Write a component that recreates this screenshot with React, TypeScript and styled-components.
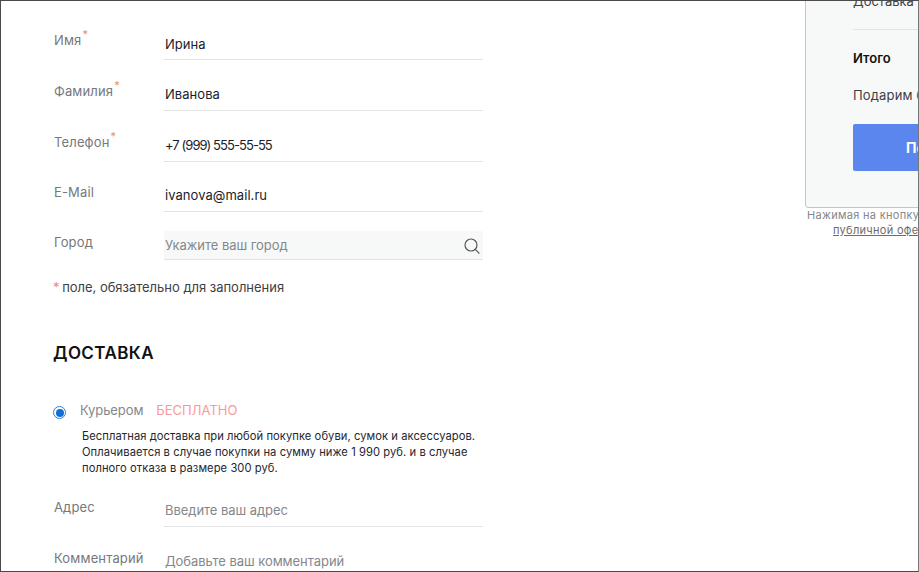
import React from "react";
import styled, { createGlobalStyle } from "styled-components";

const Global = createGlobalStyle`
  html, body { margin: 0; padding: 0; background: #fff; }
  body { font-family: "Inter", "Open Sans", "Liberation Sans", sans-serif; }
`;

const Frame = styled.div`
  box-sizing: border-box;
  width: 919px;
  height: 572px;
  border: 1px solid #4a4a4a;
  border-right-color: #777;
  overflow: hidden;
  display: flex;
  align-items: flex-start;
  background: #fff;
`;

const Main = styled.main`
  flex: none;
  width: 482px;
  padding: 18px 0 0 52px;
  box-sizing: border-box;
`;

const Row = styled.div`
  display: grid;
  grid-template-columns: 111px 319px;
  height: ${(p: { $h?: number }) => p.$h ?? 51}px;
`;

const Label = styled.div`
  padding: 13px 0 0 1px;
  font-size: 13px;
  line-height: 16px;
  letter-spacing: 0.15px;
  color: #75787d;
`;

const Star = styled.sup`
  color: #f08a70;
  font-size: 11px;
  line-height: 0;
  vertical-align: 7px;
  margin-left: 1px;
`;

const Field = styled.div<{ $filled?: boolean; $tinted?: boolean; $digits?: boolean; $top?: number }>`
  box-sizing: border-box;
  height: ${(p) => (p.$tinted ? 29 : 41)}px;
  margin-top: ${(p) => (p.$tinted ? 10 : 0)}px;
  padding: ${(p) => (p.$tinted ? 6 : p.$top ?? 16)}px 0 0 1px;
  border-bottom: 1px solid #e2e3e3;
  background: ${(p) => (p.$tinted ? "#f7f9f8" : "transparent")};
  font-size: 13px;
  line-height: 16px;
  letter-spacing: ${(p) => (p.$digits ? "-0.95px" : p.$filled ? "0.05px" : "-0.05px")};
  color: ${(p) => (p.$filled ? "#1c1c2a" : "#85878a")};
  display: flex;
  justify-content: space-between;
`;

const SearchIcon = styled.svg`
  width: 18px;
  height: 18px;
  margin: 0 2px 0 0;
  flex: none;
`;

const Note = styled.p`
  margin: 8px 0 0;
  font-size: 13px;
  line-height: 16px;
  letter-spacing: -0.02px;
  color: #3f4044;
`;

const NoteStar = styled.span`
  color: #f08a70;
  margin-right: -1px;
`;

const Heading = styled.h2`
  margin: 47px 0 0;
  font-size: 17px;
  line-height: 22px;
  font-weight: 600;
  letter-spacing: 0.4px;
  color: #111;
`;

const Delivery = styled.div`
  display: grid;
  grid-template-columns: 27px 1fr;
  margin: 38px 0 0;
`;

const Radio = styled.span`
  box-sizing: border-box;
  width: 13px;
  height: 13px;
  margin-top: 4px;
  border-radius: 50%;
  border: 1.5px solid #2a7fdc;
  background: #fff;
  display: flex;
  align-items: center;
  justify-content: center;
  &::after {
    content: "";
    width: 8px;
    height: 8px;
    border-radius: 50%;
    background: #0f6fd6;
  }
`;

const MethodLine = styled.div`
  display: flex;
  gap: 13px;
  font-size: 13px;
  line-height: 16px;
  letter-spacing: -0.1px;
  color: #85878a;
`;

const Free = styled.span`
  color: #f99a9a;
  letter-spacing: 0.02px;
`;

const Description = styled.p`
  grid-column: 2;
  margin: 9px 0 0 2px;
  width: 400px;
  font-size: 11.2px;
  line-height: 16px;
  letter-spacing: 0.06px;
  color: #26262e;
`;

const AddressRows = styled.div`
  margin-top: 10px;
`;

const Aside = styled.aside`
  flex: none;
  width: 240px;
  margin: -29px 0 0 322px;
`;

const Card = styled.section`
  box-sizing: border-box;
  height: 236px;
  padding: 20px 0 0 47px;
  border: 1px solid #c4c5c5;
  border-radius: 3px;
  background: #f7f9f8;
  font-size: 13px;
  line-height: 16px;
  color: #3f4044;
`;

const CardLine = styled.div`
  white-space: nowrap;
`;

const Divider = styled.div`
  height: 1px;
  margin-top: 20px;
  background: #e2e3e3;
`;

const Total = styled.div`
  margin-top: 20px;
  font-weight: 600;
  color: #111;
`;

const Gift = styled.div`
  margin-top: 21px;
  white-space: nowrap;
  letter-spacing: 0.15px;
`;

const Buy = styled.div`
  width: 190px;
  height: 47px;
  margin-top: 21px;
  border-radius: 2px;
  background: #5b86ee;
  color: #fff;
  font-weight: 700;
  font-size: 14px;
  line-height: 47px;
  padding-left: 53px;
  box-sizing: border-box;
  white-space: nowrap;
`;

const Legal = styled.div`
  margin: 0 0 0 2px;
  font-size: 11px;
  line-height: 15px;
  letter-spacing: 0.3px;
  color: #85878a;
  white-space: nowrap;
`;

const LegalLink = styled.a`
  display: block;
  margin-left: 26px;
  color: #6a6c70;
  text-decoration: underline;
`;

const App = () => (
  <>
    <Global />
    <Frame>
      <Main>
        <Row>
          <Label>Имя<Star>*</Star></Label>
          <Field $filled $top={17}>Ирина</Field>
        </Row>
        <Row>
          <Label>Фамилия<Star>*</Star></Label>
          <Field $filled>Иванова</Field>
        </Row>
        <Row $h={50}>
          <Label>Телефон<Star>*</Star></Label>
          <Field $filled $digits>+7 (999) 555-55-55</Field>
        </Row>
        <Row $h={50}>
          <Label>E-Mail</Label>
          <Field $filled>ivanova@mail.ru</Field>
        </Row>
        <Row $h={50}>
          <Label>Город</Label>
          <Field $tinted>
            Укажите ваш город
            <SearchIcon viewBox="0 0 18 18" fill="none" stroke="#55585a" strokeWidth="1.2">
              <circle cx="8" cy="8" r="6" />
              <path d="M12.4 12.4 L16.4 16.6" />
            </SearchIcon>
          </Field>
        </Row>
        <Note><NoteStar>*</NoteStar> поле, обязательно для заполнения</Note>
        <Heading>ДОСТАВКА</Heading>
        <Delivery>
          <Radio />
          <MethodLine>Курьером <Free>БЕСПЛАТНО</Free></MethodLine>
          <Description>
            Бесплатная доставка при любой покупке обуви, сумок и аксессуаров.
            Оплачивается в случае покупки на сумму ниже 1 990 руб. и в случае
            полного отказа в размере 300 руб.
          </Description>
        </Delivery>
        <AddressRows>
          <Row>
            <Label>Адрес</Label>
            <Field>Введите ваш адрес</Field>
          </Row>
          <Row>
            <Label>Комментарий</Label>
            <Field>Добавьте ваш комментарий</Field>
          </Row>
        </AddressRows>
      </Main>
      <Aside>
        <Card>
          <CardLine>Доставка</CardLine>
          <Divider />
          <Total>Итого</Total>
          <Gift>Подарим бонусы</Gift>
          <Buy>Подтвердить</Buy>
        </Card>
        <Legal>
          Нажимая на кнопку, вы принимаете
          <LegalLink>публичной оферты</LegalLink>
        </Legal>
      </Aside>
    </Frame>
  </>
);

export default App;
